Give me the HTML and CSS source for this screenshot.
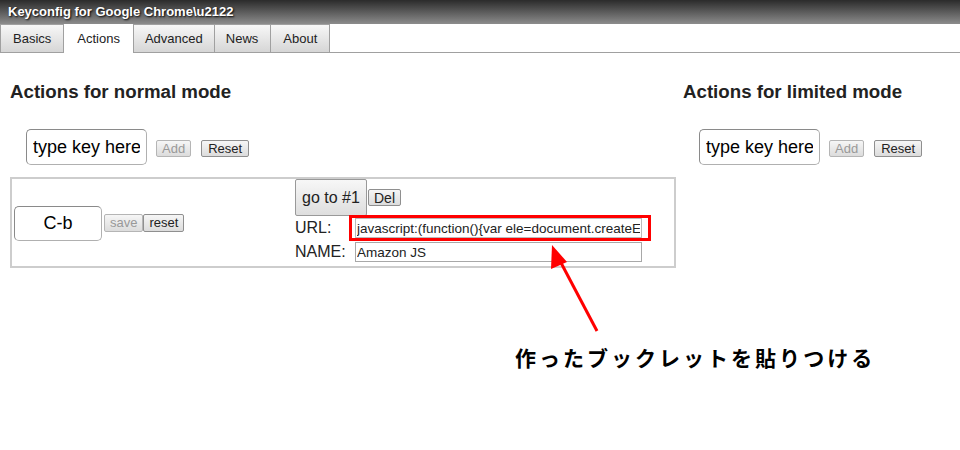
FILE: index.html
```html
<!DOCTYPE html>
<html lang="ja">

<head>
    <meta charset="UTF-8" />
    <title>Keyconfig</title>
    <link rel="stylesheet" href="styles.css">
</head>

<body>

    <div class="titlebar">Keyconfig for Google Chrome\u2122</div>

    <ul class="tabs">
        <li class="tab">Basics</li>
        <li class="tab active">Actions</li>
        <li class="tab">Advanced</li>
        <li class="tab">News</li>
        <li class="tab">About</li>
    </ul>

    <div class="columns">
        <div class="col-normal">
            <h2>Actions for normal mode</h2>
            <div class="add-row">
                <input class="key-input" type="text" value="type key here">
                <button class="small" disabled>Add</button>
                <button class="small">Reset</button>
            </div>

            <div class="action-box">
                <div class="key-cell">
                    <input class="key-input short" type="text" value="C-b">
                    <button class="small tight" disabled>save</button><button class="small tight">reset</button>
                </div>
                <div class="detail-cell">
                    <div class="goto-row">
                        <button class="goto">go to #1</button>
                        <button class="small">Del</button>
                    </div>
                    <div class="field-row">
                        <span class="label">URL:</span>
                        <span class="mark">
                            <input class="field" type="text" value="javascript:(function(){var ele=document.createElement('script');">
                        </span>
                    </div>
                    <div class="field-row">
                        <span class="label">NAME:</span>
                        <input class="field" type="text" value="Amazon JS">
                    </div>
                </div>
            </div>
        </div>

        <div class="col-limited">
            <h2>Actions for limited mode</h2>
            <div class="add-row">
                <input class="key-input" type="text" value="type key here">
                <button class="small" disabled>Add</button>
                <button class="small">Reset</button>
            </div>
        </div>
    </div>

    <!-- 注釈：矢印と説明 -->
    <svg class="arrow" width="80" height="100" viewBox="0 0 80 100">
        <line x1="65" y1="88" x2="27" y2="16" stroke="#f00" stroke-width="3" />
        <polygon points="20,2 19,26 35,19" fill="#f00" />
    </svg>
    <div class="note">作ったブックレットを貼りつける</div>

</body>

</html>
```

FILE: styles.css
```css
body {
    margin: 0;
    font-family: "Liberation Sans", Arial, sans-serif;
    color: #222;
    background: #fff;
    position: relative;
    height: 450px;
    overflow: hidden;
}

.titlebar {
    height: 24px;
    line-height: 24px;
    padding-left: 8px;
    font-size: 13px;
    font-weight: bold;
    color: #fff;
    text-shadow: 1px 1px 2px #000;
    background: linear-gradient(#2b2b2b, #8c8c8c);
}

.tabs {
    display: flex;
    margin: 0;
    padding: 0;
    list-style: none;
    border-bottom: 1px solid #a0a0a0;
    height: 28px;
}

.tab {
    height: 27px;
    line-height: 27px;
    padding: 0 12px;
    font-size: 13px;
    color: #222;
    border: 1px solid #a0a0a0;
    border-left: none;
    background: linear-gradient(#f7f7f7, #d6d6d6);
}

.tab:first-child {
    border-left: 1px solid #a0a0a0;
}

.tab.active {
    background: #fff;
    height: 28px;
    border-bottom: none;
    border-top: none;
    padding: 1px 13px 0;
}

.tab:nth-child(3) {
    padding: 0 11px;
}

.tab:nth-child(4) {
    padding: 0 12px 0 11px;
}

.columns {
    display: flex;
}

.col-normal {
    width: 666px;
    padding-left: 10px;
    margin-right: 7px;
}

.col-limited {
    flex: 1;
}

h2 {
    margin: 28px 0 0;
    font-size: 18.7px;
    line-height: 21px;
    font-weight: bold;
    color: #222;
}

.add-row {
    display: flex;
    align-items: center;
    margin: 27px 0 0 16px;
    height: 36px;
}

.col-limited .add-row {
    margin-left: 16px;
}

.key-input {
    box-sizing: border-box;
    width: 121px;
    height: 36px;
    padding: 0 6px;
    font-family: "Liberation Sans", Arial, sans-serif;
    font-size: 18px;
    color: #000;
    border: 1px solid #b0b0b0;
    border-top-color: #8a8a8a;
    border-left-color: #8a8a8a;
    border-radius: 5px;
    background: #fff;
}

.key-input.short {
    width: 88px;
    text-align: center;
    height: 35px;
}

button.small {
    font-family: "Liberation Sans", Arial, sans-serif;
    font-size: 13px;
    color: #222;
    height: 17px;
    line-height: 14px;
    padding: 0 5px;
    margin-left: 9px;
    margin-top: 3px;
    border: 1px solid #8f8f8f;
    border-radius: 2px;
    background: linear-gradient(#f6f6f6, #dcdcdc);
}

button.small + button.small {
    margin-left: 10px;
    padding: 0 6px;
}

button.small:disabled {
    color: #999;
    border-color: #b5b5b5;
}

button.tight {
    margin-left: 2px;
    margin-top: 0;
    height: 18px;
}

button.tight + button.tight {
    margin-left: 0;
    padding: 0 5px;
}

.action-box {
    display: flex;
    margin-top: 12px;
    width: 666px;
    height: 91px;
    box-sizing: border-box;
    border: 2px solid #cdcdcd;
}

.key-cell {
    display: flex;
    align-items: center;
    width: 281px;
    padding-left: 2px;
    padding-top: 1px;
}

.detail-cell {
    display: flex;
    flex-direction: column;
}

.goto-row {
    display: flex;
    align-items: center;
}

button.goto {
    height: 37px;
    width: 72px;
    font-family: "Liberation Sans", Arial, sans-serif;
    font-size: 16px;
    color: #222;
    border: 1px solid #999;
    border-radius: 2px;
    background: linear-gradient(#f7f7f7, #dedede);
    padding: 0;
}

.goto-row button.small {
    margin: 0 0 0 1px;
    height: 17px;
    font-size: 14px;
    padding: 0 5px;
}

.field-row {
    display: flex;
    align-items: center;
    height: 24px;
}

.label {
    width: 60px;
    font-size: 16px;
    color: #222;
}

.mark {
    display: inline-flex;
    border: 3px solid #f00;
    padding: 0 6px 0 3px;
    margin-left: -6px;
}

.field {
    box-sizing: border-box;
    width: 287px;
    height: 20px;
    padding: 0 1px;
    font-family: "Liberation Sans", Arial, sans-serif;
    font-size: 13.5px;
    color: #222;
    border: 1px solid #a8a8a8;
}

.mark .field {
    border-color: #bbb;
}

.arrow {
    position: absolute;
    left: 532px;
    top: 243px;
}

.note {
    position: absolute;
    left: 515px;
    top: 342px;
    font-family: "Noto Sans CJK JP", sans-serif;
    font-size: 21px;
    font-weight: bold;
    letter-spacing: 3px;
    color: #000;
}
```
